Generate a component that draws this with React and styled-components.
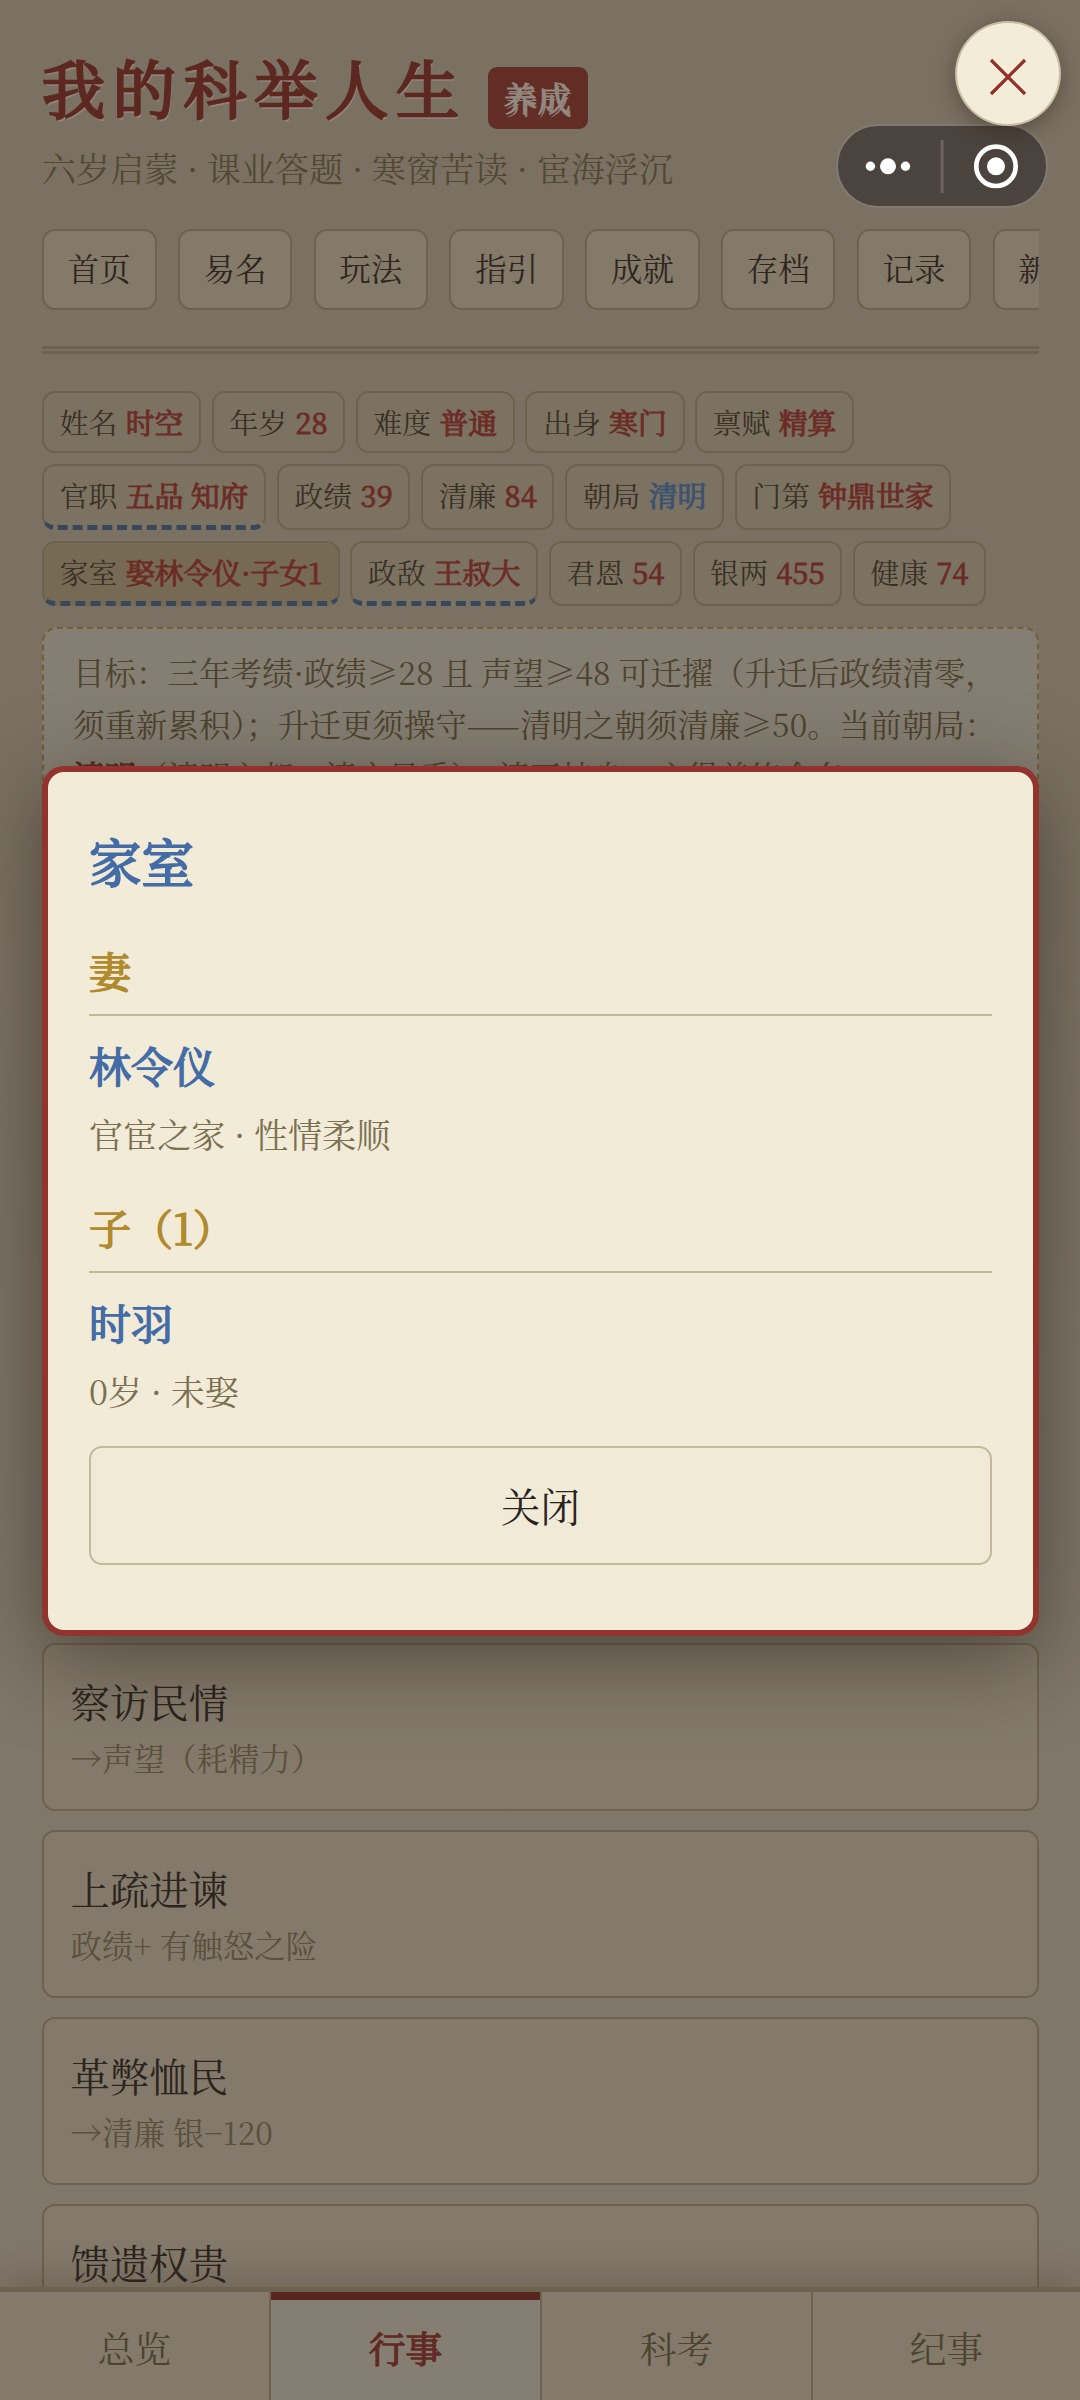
import React from "react";
import styled, { createGlobalStyle, css } from "styled-components";

const Global = createGlobalStyle`
  * { box-sizing: border-box; }
  body {
    margin: 0;
    background: #7b7264;
    font-family: "Noto Serif CJK SC", "Noto Serif SC", "Source Han Serif SC", "Songti SC", "Liberation Serif", "Noto Sans CJK SC", serif;
  }
  button { font-family: inherit; margin: 0; }
`;

const line = "#6c634e";

const strong = css`
  font-weight: 400;
  -webkit-text-stroke: 0.036em currentColor;
`;

const Page = styled.div`
  position: relative;
  display: flex;
  flex-direction: column;
  width: 1080px;
  height: 2400px;
  overflow: hidden;
  background: linear-gradient(180deg, #7b7163 0%, #7a7162 30%, #7f776a 75%, #80786a 100%);
  color: #2c241d;
`;

const Content = styled.main`
  flex: 1;
  min-height: 0;
  overflow: hidden;
  padding: 46px 41px 0 42px;
`;

const Header = styled.header`
  height: 308px;
  border-bottom: 8px double ${line};
`;

const TitleRow = styled.div`
  display: flex;
  height: 88px;
`;

const Title = styled.h1`
  margin: 0;
  font-size: 63px;
  line-height: 80px;
  letter-spacing: 7.8px;
  font-weight: 400;
  -webkit-text-stroke: 0.042em currentColor;
  color: #5c2820;
  text-shadow: 1.5px 3px 0 #93817a;
  white-space: nowrap;
`;

const Badge = styled.span`
  align-self: flex-start;
  margin: 21px 0 0 21px;
  width: 100px;
  height: 62px;
  border-radius: 9px;
  background: #612d25;
  color: #918880;
  font-size: 33px;
  line-height: 60px;
  ${strong}
  letter-spacing: 1px;
  text-align: center;
  text-shadow: 1.5px 3px 0 #93817a;
`;

const Subtitle = styled.p`
  margin: 9px 0 0;
  height: 53px;
  font-size: 34.1px;
  line-height: 50px;
  color: #524935;
  white-space: nowrap;
`;

const Nav = styled.nav`
  display: flex;
  gap: 21.3px;
  margin-top: 33px;
  overflow: hidden;
`;

const NavButton = styled.button`
  flex: 0 0 114.5px;
  height: 81px;
  padding: 0 0 3px;
  border: 2px solid ${line};
  border-radius: 13px;
  background: #837a6a;
  color: #2f261e;
  font-size: 31.5px;
  line-height: 74px;
`;

const Chips = styled.div`
  display: flex;
  flex-direction: column;
  gap: 11px;
  margin-top: 37px;
`;

const ChipRow = styled.div`
  display: flex;
  gap: 10.5px;
`;

const Chip = styled.span`
  height: ${(p) => (p.$tall ? 65.5 : 62)}px;
  padding: 0 15.75px;
  border: 2px solid ${line};
  border-radius: 13px;
  background: ${(p) => (p.$active ? "#766a54" : "#7c7261")};
  font-size: 28.875px;
  line-height: 57px;
  white-space: nowrap;
  color: #393125;
  ${(p) => p.$link && css`border-bottom: 5px dashed #39475d;`}
`;

const Value = styled.b`
  margin-left: 0.8px;
  ${strong}
  color: ${(p) => (p.$blue ? "#3c5270" : "#6c2c26")};
`;

const Goal = styled.section`
  margin-top: 21px;
  height: 200px;
  padding: 17px 29px;
  border: 2px dashed #705f37;
  border-radius: 15px;
  background: #857e72;
  color: #4d4430;
  font-size: 31.5px;
  line-height: 52px;
  white-space: nowrap;
  b { color: #5c2820; ${strong} }
`;

const Actions = styled.section`
  display: flex;
  flex-direction: column;
  gap: 19px;
  margin-top: 816px;
`;

const ActionCard = styled.article`
  flex: none;
  height: 168px;
  padding: 28px 26.5px 0;
  border: 2px solid ${line};
  border-radius: 13px;
  background: #837a6b;
`;

const ActionName = styled.div`
  font-size: 39.4px;
  line-height: 56px;
`;

const ActionNote = styled.div`
  font-size: 31.5px;
  line-height: 57px;
  color: #5a503c;
`;

const TabBar = styled.footer`
  position: relative;
  display: grid;
  grid-template-columns: 271px 271px 271px 1fr;
  height: 113px;
  border-top: 5px solid ${line};
  background: #837a6b;
  box-shadow: 0 -10px 32px rgba(60, 45, 30, 0.25);
`;

const Tab = styled.button`
  padding: 0 0 1px;
  border: 0;
  border-right: 2px solid ${line};
  background: transparent;
  color: #4d4430;
  font-size: 36.75px;
  line-height: 111px;
  &:last-child { border-right: 0; }
  ${(p) => p.$active && css`
    background: #857e72;
    color: #612a22;
    ${strong}
    box-shadow: inset 0 8px 0 #57261e;
  `}
`;

const Overlay = styled.div`
  position: absolute;
  inset: 0;
  display: flex;
  align-items: center;
  justify-content: center;
  padding: 2px 41px 0 42px;
`;

const Modal = styled.section`
  flex: 1;
  height: 870px;
  padding: 51.5px 41px 0;
  border: 6px solid #92332d;
  border-radius: 22px;
  background: #f2ebd8;
  box-shadow: 0 21px 84px rgba(30, 24, 14, 0.5);
`;

const ModalTitle = styled.h2`
  margin: 0;
  height: 77px;
  font-size: 52.5px;
  line-height: 74px;
  ${strong}
  color: #446ca6;
`;

const Group = styled.div`
  padding-top: ${(p) => p.$gap}px;
`;

const GroupTitle = styled.h3`
  margin: 0;
  height: 73px;
  border-bottom: 2.6px solid #bfb899;
  font-size: 42px;
  line-height: 55px;
  ${strong}
  color: #b08a2c;
`;

const PersonName = styled.div`
  margin-top: 21px;
  height: 60px;
  font-size: 42px;
  line-height: 56px;
  ${strong}
  color: #446ca6;
`;

const PersonNote = styled.div`
  margin-top: 12px;
  height: 52px;
  font-size: 34.1px;
  line-height: 50px;
  color: #7b7050;
`;

const CloseButton = styled.button`
  display: block;
  width: 100%;
  height: 119px;
  margin-top: 28.5px;
  padding: 0 0 2px;
  border: 2px solid #c1ba9d;
  border-radius: 13px;
  background: #f1ead6;
  color: #29231f;
  font-size: 39.4px;
`;

const RoundClose = styled.button`
  position: absolute;
  left: 955px;
  top: 21px;
  width: 106px;
  height: 105px;
  padding: 0;
  border: 2px solid #c6bfa4;
  border-radius: 50%;
  background: #f3ecd9;
  box-shadow: 0 5px 22px rgba(35, 25, 15, 0.4);
  svg { display: block; }
`;

const Capsule = styled.div`
  position: absolute;
  left: 836px;
  top: 124px;
  display: flex;
  width: 212px;
  height: 84px;
  border: 2px solid #827a71;
  border-radius: 42px;
  background: #4b433d;
`;

const NAV = ["首页", "易名", "玩法", "指引", "成就", "存档", "记录", "新局"];

const CHIPS = [
  [["姓名", "时空"], ["年岁", "28"], ["难度", "普通"], ["出身", "寒门"], ["禀赋", "精算"]],
  [["官职", "五品 知府", { link: true }], ["政绩", "39"], ["清廉", "84"], ["朝局", "清明", { blue: true }], ["门第", "钟鼎世家"]],
  [["家室", "娶林令仪·子女1", { link: true, active: true }], ["政敌", "王叔大", { link: true }], ["君恩", "54"], ["银两", "455"], ["健康", "74"]],
];

const ACTIONS = [
  ["察访民情", "→声望（耗精力）"],
  ["上疏进谏", "政绩+ 有触怒之险"],
  ["革弊恤民", "→清廉 银−120"],
  ["馈遗权贵"],
];

const TABS = ["总览", "行事", "科考", "纪事"];

export default function App() {
  return (
    <Page>
      <Global />
      <Content>
        <Header>
          <TitleRow>
            <Title>我的科举人生</Title>
            <Badge>养成</Badge>
          </TitleRow>
          <Subtitle>六岁启蒙 · 课业答题 · 寒窗苦读 · 宦海浮沉</Subtitle>
          <Nav>
            {NAV.map((n) => <NavButton key={n}>{n}</NavButton>)}
          </Nav>
        </Header>
        <Chips>
          {CHIPS.map((row, i) => (
            <ChipRow key={i}>
              {row.map(([label, value, o = {}]) => (
                <Chip key={label} $tall={i > 0} $link={o.link} $active={o.active}>
                  {label} <Value $blue={o.blue}>{value}</Value>
                </Chip>
              ))}
            </ChipRow>
          ))}
        </Chips>
        <Goal>
          目标：三年考绩·政绩≥28 且 声望≥48 可迁擢（升迁后政绩清零，<br />
          须重新累积）；升迁更须操守——清明之朝须清廉≥50。当前朝局：<br />
          <b>清明</b>（清明之朝，清官最重），清正持身，方得善终令名。
        </Goal>
        <Actions>
          {ACTIONS.map(([name, note]) => (
            <ActionCard key={name}>
              <ActionName>{name}</ActionName>
              {note && <ActionNote>{note}</ActionNote>}
            </ActionCard>
          ))}
        </Actions>
      </Content>
      <TabBar>
        {TABS.map((t) => <Tab key={t} $active={t === "行事"}>{t}</Tab>)}
      </TabBar>
      <Overlay>
        <Modal>
          <ModalTitle>家室</ModalTitle>
          <Group $gap={42}>
            <GroupTitle>妻</GroupTitle>
            <PersonName>林令仪</PersonName>
            <PersonNote>官宦之家 · 性情柔顺</PersonNote>
          </Group>
          <Group $gap={39}>
            <GroupTitle>子（1）</GroupTitle>
            <PersonName>时羽</PersonName>
            <PersonNote>0岁 · 未娶</PersonNote>
          </Group>
          <CloseButton>关闭</CloseButton>
        </Modal>
      </Overlay>
      <Capsule>
        <svg width="208" height="80" viewBox="838 126 208 80">
          <g fill="#fff">
            <circle cx="870.4" cy="166.3" r="4.7" />
            <circle cx="888" cy="166.3" r="8" />
            <circle cx="905.5" cy="166.3" r="4.7" />
            <circle cx="996" cy="166.3" r="9" />
          </g>
          <rect x="940.6" y="140" width="3" height="53" fill="#6d645e" />
          <circle cx="996" cy="166.3" r="19.7" fill="none" stroke="#fff" strokeWidth="4.7" />
        </svg>
      </Capsule>
      <RoundClose aria-label="关闭">
        <svg width="102" height="101" viewBox="957 23 102 101">
          <path d="M991 60L1025 94M1025 60L991 94" fill="none" stroke="#8f302a" strokeWidth="3.2" />
        </svg>
      </RoundClose>
    </Page>
  );
}
